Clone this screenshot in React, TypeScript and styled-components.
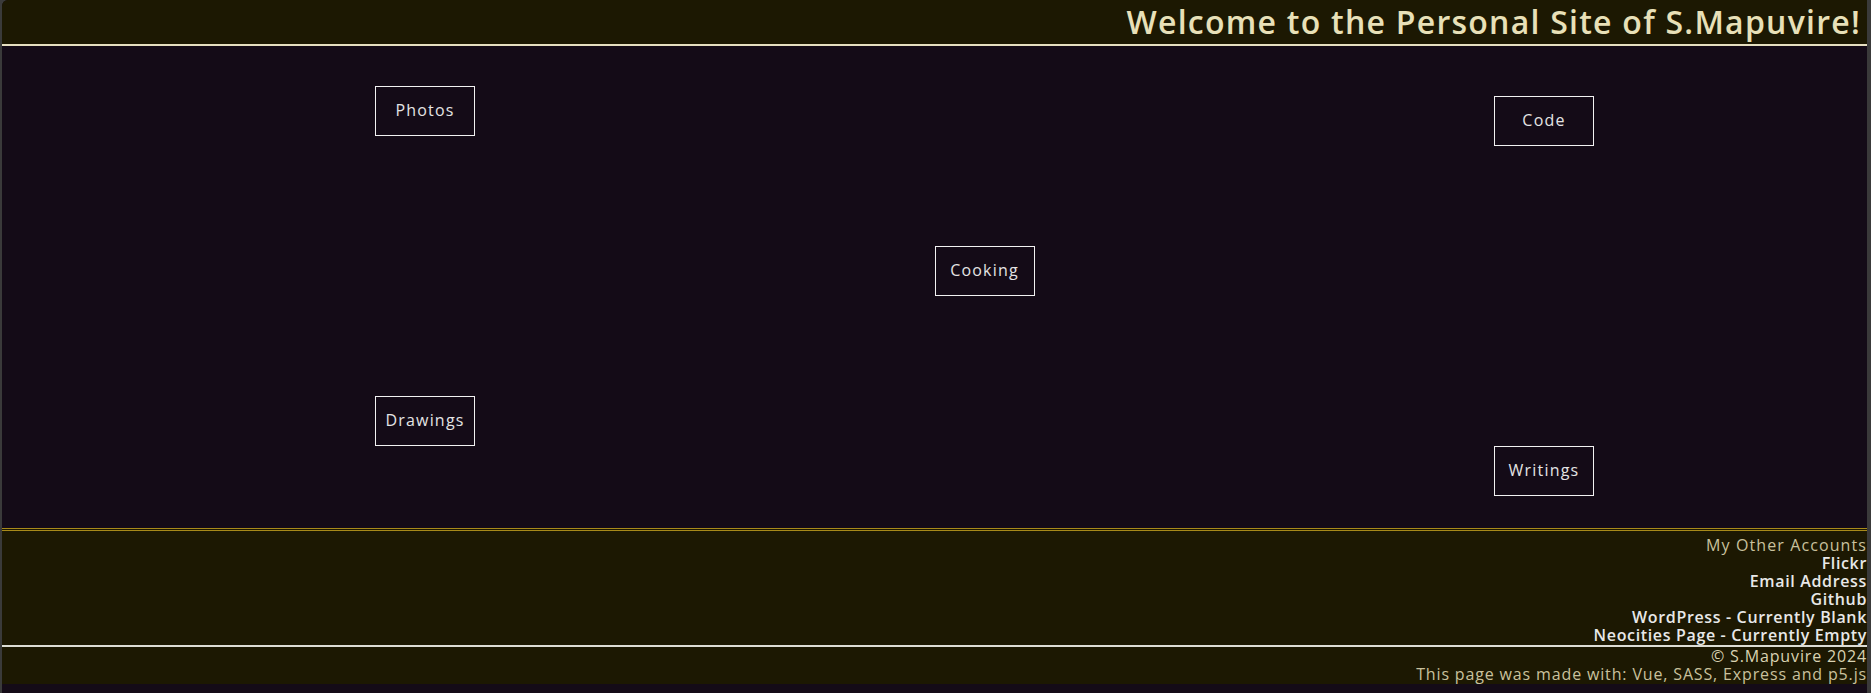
import React from "react";
import styled, { createGlobalStyle } from "styled-components";

const Global = createGlobalStyle`
  html, body { margin: 0; padding: 0; background: #3a3a3a; }
  body { font-family: "Open Sans", "Noto Sans", sans-serif; }
  * { box-sizing: border-box; }
`;

const Frame = styled.div`
  width: 1871px;
  height: 693px;
  padding: 0 4px 0 2px;
  background: #3a3a3a;
  overflow: hidden;
`;

const Page = styled.div`
  height: 100%;
  background: #140b17;
  border-top-left-radius: 6px;
  overflow: hidden;
  display: flex;
  flex-direction: column;
`;

const Header = styled.header`
  height: 46px;
  background: #1c1802;
  border-bottom: 2px solid #e6dfc0;
  display: flex;
  justify-content: flex-end;
  align-items: center;
  padding-right: 6px;
`;

const Title = styled.h1`
  margin: 0;
  font-family: "Open Sans", "Noto Sans", sans-serif;
  font-size: 32px;
  font-weight: 600;
  letter-spacing: 1.25px;
  color: #e8e0b8;
  line-height: 38px;
`;

const Canvas = styled.main`
  height: 482px;
  display: grid;
  grid-template-columns: repeat(5, 1fr);
  grid-template-rows: 1fr;
`;

const NavButton = styled.button<{ $col: number; $top: number; $shift?: boolean }>`
  grid-row: 1;
  grid-column: ${(p) => p.$col};
  align-self: start;
  justify-self: start;
  margin-top: ${(p) => p.$top}px;
  margin-left: ${(p) => (p.$shift ? "50%" : "0")};
  width: 100px;
  height: 50px;
  background: transparent;
  border: 1px solid #f2f2f2;
  color: #e4e4e4;
  font-family: "Open Sans", "Noto Sans", sans-serif;
  font-size: 16px;
  letter-spacing: 1.2px;
  padding: 0 0 3px;
  cursor: pointer;
`;

const Accounts = styled.section`
  border-top: 3px double #a88a1a;
  background: #1c1802;
  padding: 5px 0 1px;
  display: flex;
  flex-direction: column;
  align-items: flex-end;
  border-bottom: 2px solid #dcdcd4;
`;

const Heading = styled.div`
  font-size: 16px;
  line-height: 18px;
  letter-spacing: 1.1px;
  color: #c9c19d;
`;

const AccountLink = styled.a`
  font-size: 16px;
  line-height: 18px;
  letter-spacing: 0.65px;
  color: #e8e8e8;
  font-weight: 600;
  text-decoration: none;
`;

const Credits = styled.footer`
  background: #1c1802;
  display: flex;
  flex-direction: column;
  align-items: flex-end;
  padding-bottom: 1px;
`;

const CreditLine = styled.div<{ $muted?: boolean }>`
  font-size: 16px;
  line-height: 18px;
  letter-spacing: 0.85px;
  color: ${(p) => (p.$muted ? "#c9c19d" : "#d9d2b2")};
`;

export default function App() {
  return (
    <>
      <Global />
      <Frame>
        <Page>
          <Header>
            <Title>Welcome to the Personal Site of S.Mapuvire!</Title>
          </Header>
          <Canvas>
            <NavButton $col={2} $top={40}>Photos</NavButton>
            <NavButton $col={5} $top={50}>Code</NavButton>
            <NavButton $col={3} $top={200} $shift>Cooking</NavButton>
            <NavButton $col={2} $top={350}>Drawings</NavButton>
            <NavButton $col={5} $top={400}>Writings</NavButton>
          </Canvas>
          <Accounts>
            <Heading>My Other Accounts</Heading>
            <AccountLink href="#">Flickr</AccountLink>
            <AccountLink href="#">Email Address</AccountLink>
            <AccountLink href="#">Github</AccountLink>
            <AccountLink href="#">WordPress - Currently Blank</AccountLink>
            <AccountLink href="#">Neocities Page - Currently Empty</AccountLink>
          </Accounts>
          <Credits>
            <CreditLine>© S.Mapuvire 2024</CreditLine>
            <CreditLine $muted>This page was made with: Vue, SASS, Express and p5.js</CreditLine>
          </Credits>
        </Page>
      </Frame>
    </>
  );
}
